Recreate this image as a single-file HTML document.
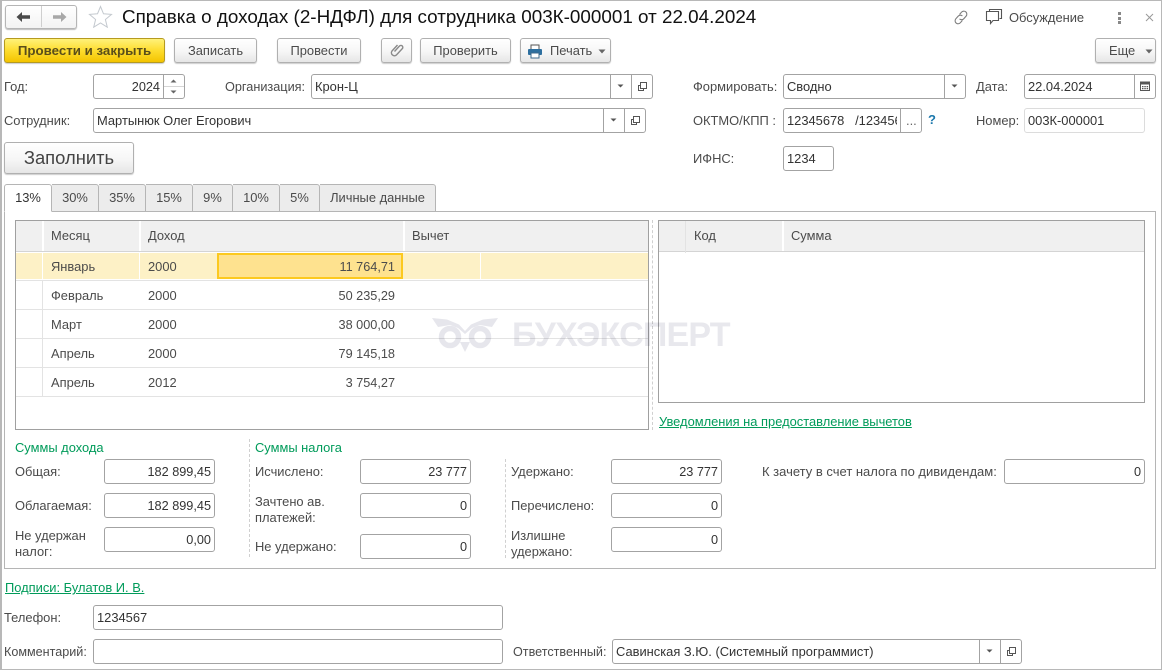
<!DOCTYPE html>
<html lang="ru"><head><meta charset="utf-8"><title>Справка</title>
<style>
html,body{margin:0;padding:0;background:#fff}
#p{position:relative;width:1162px;height:670px;overflow:hidden;background:#fff;font:12.9px/14px "Liberation Sans",Arial,sans-serif;color:#4b4b4b;box-sizing:border-box;border:1px solid #b8b8b8;border-width:1px 1px 1px 2px}
#w{position:absolute;left:-2px;top:-1px;width:1162px;height:670px}
#w div,#w span.a,#w svg{position:absolute;box-sizing:border-box}
.t{white-space:nowrap;line-height:14px}
.b{border:1px solid #b0b0b0;border-radius:3px;background:linear-gradient(#fff,#f6f6f6 55%,#e6e6e6);box-shadow:0 1px 1px #ccc;height:25px;top:38px;text-align:center;line-height:23px;color:#4b4b4b;white-space:nowrap}
.f{border:1px solid #a3a3a3;border-radius:3px;background:#fff;height:25px;line-height:24px;padding:0 3px;color:#333;white-space:nowrap;overflow:hidden}
.r{text-align:right;font-size:12.7px}
.v{width:1px;background:#a3a3a3;height:23px}
.tab{top:184px;height:28px;background:#ececec;border:1px solid #b5b5b5;border-left:0;border-radius:0 3px 0 0;text-align:center;line-height:26px;color:#4b4b4b;white-space:nowrap}
.g{color:#009b5a}
.h{background:#f0f0f0}
.c{width:2px;background:#fff}
.l{height:1px;background:#e3e3e3}
.d{width:0;border-left:1px dashed #d0d0d0}
</style></head><body>
<div id="p"><div id="w">

<div style="left:5px;top:5px;width:72px;height:24px;border:1px solid #b5b5b5;border-radius:3px;background:linear-gradient(#fff,#f3f3f3);box-shadow:0 1px 1px #bbb"></div>
<div style="left:41px;top:6px;width:1px;height:21px;background:#cfcfcf"></div>
<svg style="left:16px;top:11px" width="15" height="12" viewBox="0 0 15 12"><path d="M0.5 6L6 1v3.2h8v3.6H6V11z" fill="#4a4a4a"/></svg>
<svg style="left:52px;top:11px" width="15" height="12" viewBox="0 0 15 12"><path d="M14.5 6L9 1v3.2H1v3.6h8V11z" fill="#a8a8a8"/></svg>
<svg style="left:88px;top:5px" width="25" height="23" viewBox="0 0 25 23"><path d="M12.5 1.5l3 7.3 8 .6-6.1 5.1 1.9 7.7-6.8-4.2-6.8 4.2 1.9-7.7L1.5 9.4l8-.6z" fill="#fff" stroke="#c4c9cf" stroke-width="1"/></svg>
<div class="t" style="left:122px;top:6px;font-size:18.85px;line-height:21px;color:#111">Справка о доходах (2-НДФЛ) для сотрудника 003К-000001 от 22.04.2024</div>

<svg style="left:952px;top:9px" width="18" height="17" viewBox="0 0 18 17"><g fill="none" stroke="#7d7d7d" stroke-width="1.1"><path d="M7.5 5.5l2-2.3a3 3 0 0 1 4.6 3.9l-2.3 2.6a3 3 0 0 1-4.3.2"/><path d="M10.4 11.4l-2 2.3a3 3 0 0 1-4.6-3.9l2.3-2.6a3 3 0 0 1 4.3-.2"/></g></svg>
<svg style="left:985px;top:8px" width="18" height="17" viewBox="0 0 18 17"><g fill="none" stroke="#555" stroke-width="1.1"><path d="M4.5 3V1.5h12v9H14.5"/><path d="M1.5 3.5h12v9H8L5.5 15.500v-3h-4z" fill="#fff"/></g></svg>
<div class="t" style="left:1009px;top:11px;color:#4b4b4b">Обсуждение</div>
<div style="left:1118px;top:12px;width:3px;height:3px;background:#888"></div>
<div style="left:1118px;top:17px;width:3px;height:3px;background:#888"></div>
<div style="left:1118px;top:21px;width:3px;height:3px;background:#888"></div>
<svg style="left:1144px;top:12px" width="11" height="11" viewBox="0 0 11 11"><path d="M2 2l7 7M9 2l-7 7" stroke="#999" stroke-width="1"/></svg>

<div class="b" style="left:4px;width:161px;font-size:13.3px;background:linear-gradient(#fff27a,#fddc2e 50%,#f4c400);border-color:#b59a20;font-weight:bold;color:#5a4e1a">Провести и закрыть</div>
<div class="b" style="left:174px;width:83px">Записать</div>
<div class="b" style="left:277px;width:84px">Провести</div>
<div class="b" style="left:381px;width:31px"></div>
<svg style="left:389px;top:42px" width="16" height="16" viewBox="0 0 16 16"><path d="M4.5 9.500l5-5.500a1.900 1.900 0 0 1 2.800 2.600l-6 6.500a3 3 0 0 1-4.300-4.100l5.500-6" fill="none" stroke="#8a8a8a" stroke-width="1.400" transform="translate(1 0)"/></svg>
<div class="b" style="left:420px;width:91px">Проверить</div>
<div class="b" style="left:520px;width:91px;text-align:left;padding-left:29px">Печать</div>
<svg style="left:527px;top:44px" width="16" height="15" viewBox="0 0 16 15"><rect x="4" y="1" width="8" height="5" fill="#fff" stroke="#555"/><rect x="1" y="5" width="14" height="6" rx="1" fill="#2d6f9f"/><rect x="4" y="9" width="8" height="5" fill="#fff" stroke="#3c6a8c"/></svg>
<svg style="left:598px;top:49px" width="8" height="5" viewBox="0 0 8 5"><path d="M0.5 0.5h7L4 4.500z" fill="#666"/></svg>
<div class="b" style="left:1095px;width:61px;text-align:left;padding-left:13px">Еще</div>
<svg style="left:1145px;top:49px" width="8" height="5" viewBox="0 0 8 5"><path d="M0.5 0.5h7L4 4.500z" fill="#666"/></svg>

<div class="t" style="left:4px;top:80px">Год:</div>
<div class="f r" style="left:93px;top:74px;width:92px;padding-right:24px">2024</div>
<div class="v" style="left:163px;top:75px"></div>
<div style="left:164px;top:86px;width:20px;height:1px;background:#d5d5d5"></div>
<svg style="left:170px;top:79px" width="7" height="4" viewBox="0 0 7 4"><path d="M0.5 3.500h6L3.500 0.500z" fill="#666"/></svg>
<svg style="left:170px;top:90px" width="7" height="4" viewBox="0 0 7 4"><path d="M0.5 0.500h6L3.500 3.500z" fill="#666"/></svg>

<div class="t" style="left:225px;top:80px;font-size:12.7px">Организация:</div>
<div class="f" style="left:311px;top:74px;width:342px">Крон-Ц</div>
<div class="v" style="left:610px;top:75px"></div><div class="v" style="left:631px;top:75px"></div>
<svg style="left:617px;top:84px" width="8" height="5" viewBox="0 0 8 5"><path d="M0.5 0.500h6L3.500 3.500z" fill="#555"/></svg>
<svg style="left:637px;top:81px" width="11" height="11" viewBox="0 0 11 11"><path d="M3.500 1.500h6v6h-6z" fill="none" stroke="#555"/><path d="M3.500 4.500h-2v5h5v-2" fill="none" stroke="#555"/></svg>

<div class="t" style="left:4px;top:114px">Сотрудник:</div>
<div class="f" style="left:93px;top:108px;width:553px">Мартынюк Олег Егорович</div>
<div class="v" style="left:603px;top:109px"></div><div class="v" style="left:624px;top:109px"></div>
<svg style="left:610px;top:118px" width="8" height="5" viewBox="0 0 8 5"><path d="M0.5 0.500h6L3.500 3.500z" fill="#555"/></svg>
<svg style="left:630px;top:115px" width="11" height="11" viewBox="0 0 11 11"><path d="M3.500 1.500h6v6h-6z" fill="none" stroke="#555"/><path d="M3.500 4.500h-2v5h5v-2" fill="none" stroke="#555"/></svg>

<div class="b" style="left:4px;top:142px;width:130px;height:32px;line-height:30px;font-size:18.4px;color:#444">Заполнить</div>

<div class="t" style="left:693px;top:80px">Формировать:</div>
<div class="f" style="left:783px;top:74px;width:183px">Сводно</div>
<div class="v" style="left:944px;top:75px"></div>
<svg style="left:951px;top:84px" width="8" height="5" viewBox="0 0 8 5"><path d="M0.5 0.500h6L3.500 3.500z" fill="#555"/></svg>
<div class="t" style="left:976px;top:80px">Дата:</div>
<div class="f" style="left:1024px;top:74px;width:132px">22.04.2024</div>
<div class="v" style="left:1134px;top:75px"></div>
<svg style="left:1139px;top:80px" width="12" height="12" viewBox="0 0 12 12"><path d="M1.500 2.500h9v8h-9z" fill="none" stroke="#555"/><path d="M1 1.500h10v3H1z" fill="#555"/><path d="M3 6h1.500v1.200H3zM5.300 6h1.500v1.200H5.300zM7.600 6h1.500v1.200H7.600zM3 8h1.500v1.200H3zM5.300 8h1.500v1.200H5.300zM7.600 8h1.500v1.200H7.600z" fill="#555"/></svg>

<div class="t" style="left:693px;top:114px">ОКТМО/КПП :</div>
<div class="f" style="left:783px;top:108px;width:139px">
<span style="display:inline-block;width:110px;overflow:hidden;vertical-align:top">12345678 &nbsp; /123456789</span></div>
<div class="v" style="left:900px;top:109px"></div>
<div class="t" style="left:906px;top:114px;color:#666">...</div>
<div class="t" style="left:928px;top:113px;color:#1c78ac;font-weight:bold;font-size:13px">?</div>
<div class="t" style="left:976px;top:114px">Номер:</div>
<div class="f" style="left:1024px;top:108px;width:121px;border-color:#dcdcdc">003К-000001</div>
<div class="t" style="left:693px;top:152px">ИФНС:</div>
<div class="f" style="left:783px;top:146px;width:51px">1234</div>

<div style="left:4px;top:211px;width:1152px;height:358px;border:1px solid #b5b5b5;background:#fff"></div>
<div class="tab" style="left:4px;width:48px;background:#fff;border-left:1px solid #b5b5b5;border-radius:3px 3px 0 0;border-bottom-color:#fff;color:#333;z-index:2">13%</div>
<div class="tab" style="left:52px;width:47px">30%</div>
<div class="tab" style="left:99px;width:47px">35%</div>
<div class="tab" style="left:146px;width:47px">15%</div>
<div class="tab" style="left:193px;width:40px">9%</div>
<div class="tab" style="left:233px;width:47px">10%</div>
<div class="tab" style="left:280px;width:40px">5%</div>
<div class="tab" style="left:320px;width:116px">Личные данные</div>

<!-- left table -->
<div style="left:15px;top:220px;width:634px;height:210px;border:1px solid #a0a0a0;background:#fff"></div>
<div class="h" style="left:16px;top:221px;width:632px;height:30px"></div>
<div style="left:16px;top:251px;width:632px;height:1px;background:#d4d4d4"></div>
<div class="c" style="left:42px;top:221px;height:30px"></div>
<div class="c" style="left:139px;top:221px;height:30px"></div>
<div class="c" style="left:403px;top:221px;height:30px"></div>
<div class="t" style="left:51px;top:229px">Месяц</div>
<div class="t" style="left:148px;top:229px">Доход</div>
<div class="t" style="left:412px;top:229px">Вычет</div>

<div style="left:16px;top:253px;width:632px;height:26px;background:#fdf1c6"></div>
<div class="c" style="left:42px;top:252px;height:28px;width:1px;background:#fff"></div>
<div class="c" style="left:139px;top:252px;height:28px;width:1px;background:#fff"></div>
<div class="c" style="left:480px;top:252px;height:28px;width:1px;background:#fff"></div>
<div style="left:217px;top:253px;width:186px;height:26px;background:#fee28f;border:2px solid #fcc91f"></div>
<div style="left:42px;top:280px;width:1px;height:116px;background:#e3e3e3"></div>
<div class="l" style="left:16px;top:280px;width:632px"></div>
<div class="l" style="left:16px;top:309px;width:632px"></div>
<div class="l" style="left:16px;top:338px;width:632px"></div>
<div class="l" style="left:16px;top:367px;width:632px"></div>
<div class="l" style="left:16px;top:396px;width:632px"></div>

<div class="t" style="left:51px;top:260px">Январь</div><div class="t" style="left:148px;top:260px">2000</div><div class="t r" style="left:250px;width:145px;top:260px">11 764,71</div>
<div class="t" style="left:51px;top:289px">Февраль</div><div class="t" style="left:148px;top:289px">2000</div><div class="t r" style="left:250px;width:145px;top:289px">50 235,29</div>
<div class="t" style="left:51px;top:318px">Март</div><div class="t" style="left:148px;top:318px">2000</div><div class="t r" style="left:250px;width:145px;top:318px">38 000,00</div>
<div class="t" style="left:51px;top:347px">Апрель</div><div class="t" style="left:148px;top:347px">2000</div><div class="t r" style="left:250px;width:145px;top:347px">79 145,18</div>
<div class="t" style="left:51px;top:376px">Апрель</div><div class="t" style="left:148px;top:376px">2012</div><div class="t r" style="left:250px;width:145px;top:376px">3 754,27</div>

<div class="d" style="left:652px;top:220px;height:210px"></div>

<!-- right table -->
<div style="left:658px;top:220px;width:487px;height:183px;border:1px solid #a0a0a0;background:#fff"></div>
<div class="h" style="left:659px;top:221px;width:485px;height:30px"></div>
<div style="left:659px;top:251px;width:485px;height:1px;background:#d4d4d4"></div>
<div class="c" style="left:685px;top:221px;height:32px;background:#e3e3e3;width:1px"></div>
<div class="c" style="left:782px;top:221px;height:30px"></div>
<div class="t" style="left:694px;top:229px">Код</div>
<div class="t" style="left:791px;top:229px">Сумма</div>
<div class="t g" style="left:659px;top:415px;text-decoration:underline">Уведомления на предоставление вычетов</div>

<!-- watermark -->
<svg style="left:430px;top:316px;mix-blend-mode:multiply" width="70" height="38" viewBox="0 0 70 38"><g fill="#e6e6ec"><path d="M2 2l15 1.500 12 5 6 6.500 6-6.500 12-5 15-1.500-6 9-12-2-8 3-7 6-7-6-8-3-12 2z"/><path d="M35 36l-5-10h10z"/></g><g fill="none" stroke="#e6e6ec" stroke-width="5.500"><circle cx="20" cy="21" r="8.500"/><circle cx="50" cy="21" r="8.500"/></g></svg>
<div class="t" style="left:512px;top:317px;font-size:34px;letter-spacing:-0.8px;line-height:36px;font-weight:bold;color:#e8e8ed;mix-blend-mode:multiply">БУХЭКСПЕРТ</div>

<!-- sums -->
<div class="t g" style="left:15px;top:441px">Суммы дохода</div>
<div class="t" style="left:15px;top:465px">Общая:</div>
<div class="f r" style="left:104px;top:459px;width:111px">182 899,45</div>
<div class="t" style="left:15px;top:499px">Облагаемая:</div>
<div class="f r" style="left:104px;top:493px;width:111px">182 899,45</div>
<div class="t" style="left:15px;top:528px;line-height:16px">Не удержан<br>налог:</div>
<div class="f r" style="left:104px;top:527px;width:111px">0,00</div>

<div class="d" style="left:249px;top:439px;height:118px"></div>
<div class="t g" style="left:255px;top:441px">Суммы налога</div>
<div class="t" style="left:255px;top:465px">Исчислено:</div>
<div class="f r" style="left:360px;top:459px;width:111px">23 777</div>
<div class="t" style="left:255px;top:494px;line-height:16px">Зачтено ав.<br>платежей:</div>
<div class="f r" style="left:360px;top:493px;width:111px">0</div>
<div class="t" style="left:255px;top:540px">Не удержано:</div>
<div class="f r" style="left:360px;top:534px;width:111px">0</div>

<div class="d" style="left:505px;top:459px;height:99px"></div>
<div class="t" style="left:511px;top:465px">Удержано:</div>
<div class="f r" style="left:611px;top:459px;width:111px">23 777</div>
<div class="t" style="left:511px;top:499px">Перечислено:</div>
<div class="f r" style="left:611px;top:493px;width:111px">0</div>
<div class="t" style="left:511px;top:528px;line-height:16px">Излишне<br>удержано:</div>
<div class="f r" style="left:611px;top:527px;width:111px">0</div>
<div class="t" style="left:762px;top:465px;font-size:13px">К зачету в счет налога по дивидендам:</div>
<div class="f r" style="left:1004px;top:459px;width:141px">0</div>

<!-- bottom -->
<div class="t g" style="left:5px;top:581px;text-decoration:underline">Подписи: Булатов И. В.</div>
<div class="t" style="left:4px;top:611px">Телефон:</div>
<div class="f" style="left:93px;top:605px;width:410px">1234567</div>
<div class="t" style="left:4px;top:645px;font-size:12.6px">Комментарий:</div>
<div class="f" style="left:93px;top:639px;width:410px"></div>
<div class="t" style="left:513px;top:645px;font-size:12.6px">Ответственный:</div>
<div class="f" style="left:612px;top:639px;width:410px">Савинская З.Ю. (Системный программист)</div>
<div class="v" style="left:979px;top:640px"></div><div class="v" style="left:1000px;top:640px"></div>
<svg style="left:986px;top:649px" width="8" height="5" viewBox="0 0 8 5"><path d="M0.5 0.500h6L3.500 3.500z" fill="#555"/></svg>
<svg style="left:1006px;top:646px" width="11" height="11" viewBox="0 0 11 11"><path d="M3.500 1.500h6v6h-6z" fill="none" stroke="#555"/><path d="M3.500 4.500h-2v5h5v-2" fill="none" stroke="#555"/></svg>

</div></div>
</body></html>
